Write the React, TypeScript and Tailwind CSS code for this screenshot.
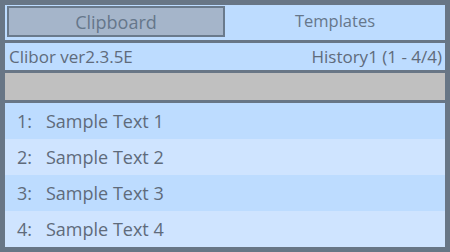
import React from "react";

const rows = ["Sample Text 1", "Sample Text 2", "Sample Text 3", "Sample Text 4"];

export default function App() {
  return (
    <div
      className="w-[450px] h-[252px] bg-[#687686] p-[5px] flex flex-col text-[#5f6b7b]"
      style={{ fontFamily: '"Open Sans", "Noto Sans", sans-serif' }}
    >
      <div className="h-[35px] bg-[#bddcff] flex items-stretch pt-[1px] pb-[3px] pl-[2px]">
        <div className="w-[218px] border-2 border-[#6a7a8c] bg-[#a5b5ca] flex items-center justify-center text-[18px] text-[#66778b] leading-none">
          Clipboard
        </div>
        <div className="flex-1 flex items-center justify-center text-[16.5px] text-[#66778b] leading-none">
          Templates
        </div>
      </div>
      <div className="h-[3px]" />
      <div className="h-[27px] bg-[#bddcff] flex items-center justify-between pl-[4px] pr-[3px] text-[17px] leading-none">
        <span>Clibor ver2.3.5E</span>
        <span>History1 (1 - 4/4)</span>
      </div>
      <div className="h-[3px]" />
      <div className="h-[27px] bg-[#c0c0c0]" />
      <div className="h-[3px]" />
      <div className="flex-1 flex flex-col">
        {rows.map((t, i) => (
          <div
            key={i}
            className={`h-[36px] flex items-center pl-[12px] text-[18px] leading-none ${i % 2 === 0 ? "bg-[#bddcff]" : "bg-[#cfe4ff]"}`}
          >
            <span className="w-[29px]">{i + 1}:</span>
            <span>{t}</span>
          </div>
        ))}
      </div>
    </div>
  );
}
